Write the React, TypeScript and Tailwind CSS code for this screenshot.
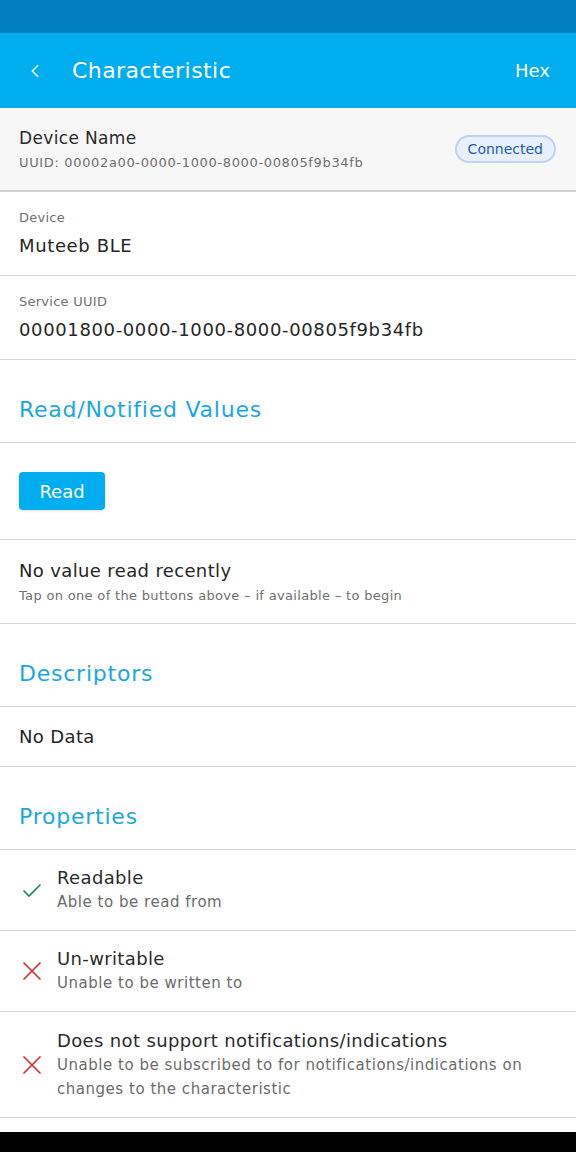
import { ChevronLeft } from "lucide-react";

const font = { fontFamily: '"DejaVu Sans", "Noto Sans", sans-serif' };

const SectionTitle = ({ title }: { title: string }) => (
  <div className="h-[83px] flex items-center px-[19px] border-b border-[#d4d4d4]">
    <span className="text-[22px] tracking-[0.035em] text-[#1aa7e0] pt-[16px]">{title}</span>
  </div>
);

const Field = ({ label, value }: { label: string; value: string }) => (
  <div className="h-[84px] flex flex-col justify-center px-[19px] border-b border-[#d4d4d4]">
    <span className="text-[13px] tracking-[0.02em] text-[#6f6f6f] leading-[18px]">{label}</span>
    <span className="text-[18px] tracking-[0.035em] text-[#262626] leading-[26px] mt-[6px]">{value}</span>
  </div>
);

const properties = [
  { ok: true, title: "Readable", desc: "Able to be read from", h: "h-[81px]" },
  { ok: false, title: "Un-writable", desc: "Unable to be written to", h: "h-[81px]" },
  {
    ok: false,
    title: "Does not support notifications/indications",
    desc: "Unable to be subscribed to for notifications/indications on changes to the characteristic",
    h: "h-[106px]",
  },
];

export default function App() {
  return (
    <div className="w-[576px] h-[1152px] bg-white flex flex-col overflow-hidden" style={font}>
      <div className="h-[33px] bg-[#0180bf]" />
      <div className="h-[75px] bg-[#00adee] flex items-center text-white">
        <ChevronLeft className="ml-[24px] w-[22px] h-[22px]" strokeWidth={1.6} />
        <span className="ml-[26px] text-[22px] tracking-[0.02em] flex-1">Characteristic</span>
        <span className="mr-[26px] text-[18px]">Hex</span>
      </div>

      <div className="h-[84px] bg-[#f7f7f7] border-b-2 border-[#d0d0d0] flex items-center px-[19px]">
        <div className="flex-1 flex flex-col">
          <span className="text-[17px] tracking-[0.02em] text-[#2b2b2b] leading-[24px]">Device Name</span>
          <span className="text-[13px] tracking-[0.05em] text-[#6f6f6f] leading-[18px] mt-[4px]">
            UUID: 00002a00-0000-1000-8000-00805f9b34fb
          </span>
        </div>
        <span className="h-[28px] px-[11px] flex items-center rounded-full bg-[#e8f0fd] border-2 border-[#bcd3f2] text-[14px] text-[#1e5bb8] mr-[1px]">
          Connected
        </span>
      </div>

      <Field label="Device" value="Muteeb BLE" />
      <Field label="Service UUID" value="00001800-0000-1000-8000-00805f9b34fb" />

      <SectionTitle title="Read/Notified Values" />

      <div className="h-[97px] flex items-center px-[19px] border-b border-[#d4d4d4]">
        <button className="h-[38px] w-[86px] rounded-[4px] bg-[#00aeef] text-white text-[18px] shadow-sm">
          Read
        </button>
      </div>

      <div className="h-[84px] flex flex-col justify-center px-[19px] border-b border-[#d4d4d4]">
        <span className="text-[18px] tracking-[0.02em] text-[#262626] leading-[26px]">No value read recently</span>
        <span className="text-[13px] tracking-[0.025em] text-[#6f6f6f] leading-[18px] mt-[3px]">
          Tap on one of the buttons above – if available – to begin
        </span>
      </div>

      <SectionTitle title="Descriptors" />

      <div className="h-[60px] flex items-center px-[19px] border-b border-[#d4d4d4]">
        <span className="text-[18px] tracking-[0.02em] text-[#262626]">No Data</span>
      </div>

      <SectionTitle title="Properties" />

      {properties.map((p) => (
        <div key={p.title} className={`${p.h} flex items-center border-b border-[#d4d4d4]`}>
          <div className="w-[57px] flex justify-center pl-[6px]">
            {p.ok ? (
              <svg width="20" height="16" viewBox="0 0 20 16" fill="none">
                <path d="M1.5 8.5 L7 14 L18.5 2.5" stroke="#168a4a" strokeWidth="1.6" />
              </svg>
            ) : (
              <svg width="20" height="20" viewBox="0 0 20 20" fill="none">
                <path d="M1.5 1.5 L18.5 18.5 M18.5 1.5 L1.5 18.5" stroke="#d8262c" strokeWidth="1.6" />
              </svg>
            )}
          </div>
          <div className="flex-1 flex flex-col pr-[36px]">
            <span className="text-[18px] tracking-[0.02em] text-[#2b2b2b] leading-[24px]">{p.title}</span>
            <span className="text-[15px] tracking-[0.035em] text-[#6b6b6b] leading-[24px]">{p.desc}</span>
          </div>
        </div>
      ))}

      <div className="flex-1" />
      <div className="h-[20px] bg-black" />
    </div>
  );
}
